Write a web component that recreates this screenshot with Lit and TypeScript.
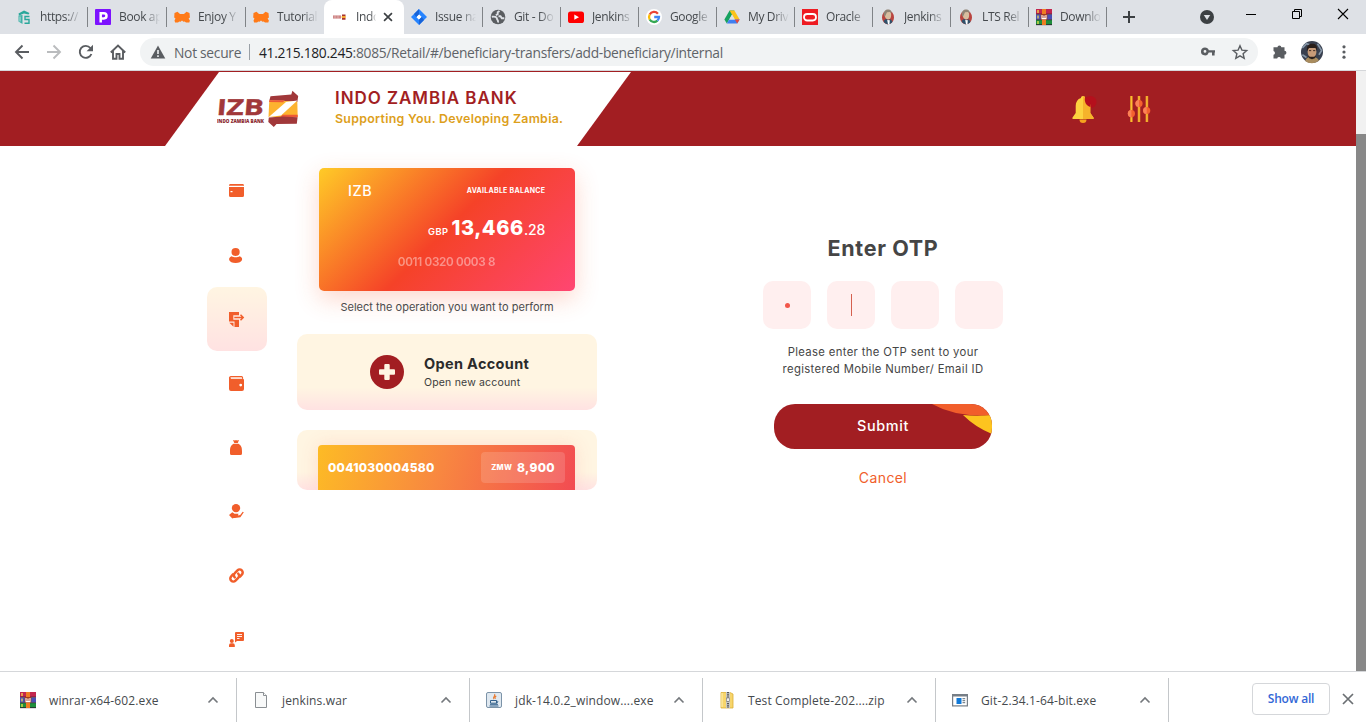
import { LitElement, html, svg, css, nothing } from "lit";
import { customElement, property } from "lit/decorators.js";
import { classMap } from "lit/directives/class-map.js";

const winrar = svg`
  <rect width="16" height="5" y="0" fill="#c2264e"/><rect width="16" height="5" y="5.5" fill="#4a4fb5"/><rect width="16" height="5" y="11" fill="#1f8f3c"/>
  <path d="M0 5.2h16M0 10.7h16M0 15.7h16" stroke="#2b1430" stroke-width=".8"/>
  <path d="M2 1v3M2 6.500v3M2 12v3" stroke="#ffe94a" stroke-width="1.2"/>
  <rect x="6" width="4" height="16" fill="#ef7d22"/><rect x="4.7" y="5" width="6.6" height="5.6" fill="#a33a1c"/>
  <path d="M6 6v3.600h4V6M8 6.500v3" stroke="#fff" fill="none" stroke-width="1.1"/>`;
const jenkins = svg`
  <ellipse cx="8" cy="8.400" rx="6" ry="7" fill="#b9443f"/>
  <path d="M5 3.500C6 .5 10.500.5 11 4.500c.6 3-.5 6-2.700 6S4 8 5 3.500z" fill="#d8bd9f"/>
  <path d="M4 7C3 1.500 6.500 0 9 .6c2 .5 3 2 2.500 3.800L10 3 7 3.200 5 7.500z" fill="#8f8374"/>
  <path d="M3.500 12 6 9.800l2 1.200 2.500-.8 2 2.300C11 16 5.500 16.500 3.500 12z" fill="#2f526c"/>
  <path d="M7.200 11l2.600.3-.4 4.200H8z" fill="#fff"/>`;
const metro = svg`<path d="M.5 4 3.500 2.700 6 5h4l2.500-2.300 3 1.300.4 4.500-1.300 1 1.300 2-.6 2H12l-1.300-1L8.800 13H7.200l-1.900-.5L4 13.500H1.100l-.6-2 1-2L.2 8.500z" fill="#ff7a18"/><path d="M6 13.200 8 11.400l2 1.800z" fill="#dee1e6"/>`;

const icons: Record<string, unknown> = {
  server: svg`<path d="M2.500 4.500 8 1.500l5.500 2.500-1 1.500L8 4.500 3 6.500z" fill="#2aa79b"/><path d="M2.500 6.500v6l4 2.500V6z" fill="#3fb0a6"/><path d="M13.500 7.500H9v3h4v3.800H8.500" stroke="#2aa79b" stroke-width="1.400" fill="none"/><path d="M4 7.500v5" stroke="#bfe5e2" stroke-width="1"/>`,
  p: svg`<rect width="16" height="16" rx="1" fill="#7d12ff"/><path d="M5.700 13.500V4.200h3.200a2.600 2.600 0 0 1 0 5.200H6" fill="none" stroke="#fff" stroke-width="2.500"/>`,
  metro,
  izb: svg`<path d="M1 6.500h8v3H1z" fill="#c46a6a"/><path d="M1 8h8M3 6v4M6 6v4" stroke="#e9c9c9" stroke-width=".6"/><path d="M10 5.500h3.500v1.700H10zM10 9h3.500v1.700H10z" fill="#a8322f"/><path d="M9.700 7h4v2h-4z" fill="#f3a62f"/>`,
  jira: svg`<path d="M8 0l8 8-8 8-8-8z" fill="#2684ff"/><path d="M8 5.300 10.700 8 8 10.700 5.300 8z" fill="#fff"/><path d="M8 0v5.300L5.300 8 3 5zM8 16v-5.300L10.700 8 13 11z" fill="#1763d8"/>`,
  globe: svg`<circle cx="8" cy="8" r="7.300" fill="#5a5d61"/><path d="M1.800 7.800c3-.6 5 .2 5.200 2 0 1.500 1.500 1 1 3.700M9.500 2 7.700 3.300v1.900L5.800 6.300M8.500 7.300h2l1.300 2h2.500" fill="none" stroke="#dee1e6" stroke-width="1.900"/>`,
  youtube: svg`<rect y="2.500" width="16" height="11.500" rx="2.600" fill="#f00"/><path d="M6.300 5.600v5.200L11 8.200z" fill="#fff"/>`,
  google: svg`<circle cx="8" cy="8" r="8" fill="#fff"/><g fill="none" stroke-width="2.300"><path d="M11.900 4.700A5 5 0 0 0 3.700 5.500" stroke="#ea4335"/><path d="M3.700 5.500a5 5 0 0 0 0 5" stroke="#fbbc05"/><path d="M3.700 10.500a5 5 0 0 0 7.700 1.200" stroke="#34a853"/><path d="M11.400 11.700A5 5 0 0 0 13 8H8.200" stroke="#4285f4"/></g>`,
  drive: svg`<path d="M5.600 1.500h4.800L5.200 10.500 2.800 14.600.4 10.500z" fill="#16a25f"/><path d="M5.600 1.500h4.800l5.200 9h-4.800z" fill="#fbc21a"/><path d="M5.200 10.500h10.400l-2.400 4.100H2.800z" fill="#3f7ff0"/><path d="M13.200 14.600l2.400-4.100h-4.800z" fill="#e8483a"/><path d="M8 5.600l2.800 4.900H5.200z" fill="#dee1e6"/>`,
  oracle: svg`<rect width="16" height="16" fill="#ee1c23"/><rect x="2" y="5" width="12" height="6.500" rx="3.200" fill="none" stroke="#fff" stroke-width="1.800"/>`,
  jenkins,
  winrar,
  file: svg`<path d="M2.500.5h8l3 3v12h-11z" fill="#f8f9f9" stroke="#8a8f93"/><path d="M10.500.5v3h3" fill="#fff" stroke="#8a8f93"/>`,
  java: svg`<rect x=".5" y=".5" width="15" height="15" rx="1.500" fill="#dfe8f0" stroke="#7c93a8"/><path d="M8.600 2c1.500 2-2.500 3-.6 5.200M10.300 4c-1.600 1-1.600 1.600-.8 2.800" stroke="#e8762a" stroke-width="1.100" fill="none"/><path d="M4.500 8.500h6v2.700h-6zM10.500 9c2-.2 1.600 2-.3 2M4 12.300h8M3.500 14h9" stroke="#33618c" fill="none"/>`,
  zip: svg`<path d="M2 .5h9l3 1.500v14H2z" fill="#f7d56b" stroke="#dcae36" stroke-width=".8"/><path d="M3 1v14" stroke="#fff2b8"/><rect x="7" width="4" height="16" fill="#c9c9c4"/><path d="M9 0v16" stroke="#555" stroke-width="2" stroke-dasharray="1.200 1"/><rect x="7.500" y="6" width="3" height="3.500" fill="#eee" stroke="#777" stroke-width=".6"/>`,
  installer: svg`<rect x=".6" y="2.600" width="14.800" height="11.300" fill="#fff" stroke="#777e86" stroke-width="1.200"/><path d="M0 3.500h16" stroke="#777e86" stroke-width="2"/><rect x="4.500" y="6" width="5" height="6" fill="#1079d8"/><path d="M10.500 6.700h2.700M10.500 8.700h2.700M10.500 10.700h2.700" stroke="#5c6b78"/>`,

  back: svg`<path d="M15 8H2.500M8.500 1.500 2 8l6.500 6.500" fill="none" stroke="#5a5d61" stroke-width="1.900"/>`,
  forward: svg`<path d="M1 8h12.500M7.500 1.500 14 8l-6.500 6.500" fill="none" stroke="#babcbe" stroke-width="1.900"/>`,
  reload: svg`<path d="M13.400 10A6 6 0 1 1 12.400 4l1.300 1.600" fill="none" stroke="#5a5d61" stroke-width="1.900"/><path d="M15 .8v6.400H8.600z" fill="#5a5d61"/>`,
  home: svg`<path d="M.8 8.500 8 1.500l7.200 7M3 7v7.700h3.500V10h3v4.700H13V7" fill="none" stroke="#5a5d61" stroke-width="1.900"/>`,
  warning: svg`<path d="M8 1.500 15.300 14.500H.7z" fill="#5a5d61"/><path d="M8 6v4M8 11.300v1.700" stroke="#f1f3f4" stroke-width="1.600"/>`,
  key: svg`<path d="M5 4a4 4 0 1 0 3.800 5.200H12V12h2.600V9.200H15V6.800H8.800A4 4 0 0 0 5 4zm0 2.600a1.400 1.400 0 1 1 0 2.800 1.400 1.400 0 0 1 0-2.800z" fill="#5a5d61" transform="translate(0 -.6)"/>`,
  star: svg`<path d="m8 1.700 1.900 4.400 4.800.4-3.600 3.200 1.100 4.700L8 11.900l-4.200 2.500 1.100-4.700L1.300 6.500l4.800-.4z" fill="none" stroke="#5a5d61" stroke-width="1.400"/>`,
  puzzle: svg`<path d="M5.500 3.300a1.900 1.900 0 0 1 3.800 0h3.200v3.500a1.900 1.900 0 0 1 0 3.900v3.800H8.900a1.900 1.900 0 0 0-3.700 0H1.500v-3.700a1.900 1.900 0 0 0 0-3.700V3.300z" fill="#5a5d61"/>`,
  dots: svg`<g fill="#5a5d61"><circle cx="8" cy="2.800" r="1.600"/><circle cx="8" cy="8" r="1.600"/><circle cx="8" cy="13.200" r="1.600"/></g>`,
  avatar: svg`<circle cx="8" cy="8" r="8" fill="#39404f"/><path d="M1 5l3-3 3 1M12 2l3 5-2 3M1 10l3 2" stroke="#8797a8" stroke-width="1.200" fill="none"/><path d="M3 14.500C4 12 6 11.500 8 11.500s4.500 1 5 2.800a8 8 0 0 1-10 .2z" fill="#a98c5e"/><ellipse cx="8" cy="7.800" rx="3.200" ry="4.600" fill="#c79b78"/><path d="M4.300 7.500C3.800 3 6 2 8.200 2s4.100 1 3.500 5.500L10.700 5 5.800 5zM5 10.500l1.500.9h3l1.500-.9-.9 2-2.100.8-2-.8z" fill="#2a1f1a"/><path d="M5.800 7h1.600M8.800 7h1.600" stroke="#3a2620" stroke-width=".7"/>`,
  plus: svg`<path d="M8 2v12M2 8h12" stroke="#3c4043" stroke-width="2"/>`,
  close: svg`<path d="m3.500 3.500 9 9m0-9-9 9" stroke="#3c4043" stroke-width="1.900"/>`,
  profile: svg`<circle cx="8" cy="8" r="8" fill="#3c4043"/><path d="M4.300 5.800h7.400L8 11.500z" fill="#dee1e6"/>`,
  minimize: svg`<path d="M3 8.500h10" stroke="#000"/>`,
  restore: svg`<path d="M3.500 5.500h7v7h-7zM5.500 5.500v-2h7v7h-2" fill="none" stroke="#000"/>`,
  exit: svg`<path d="m3 3 10 10M13 3 3 13" stroke="#000" stroke-width="1.100"/>`,
  chevron: svg`<path d="m3.500 10.500 4.500-4.500 4.500 4.500" fill="none" stroke="#74787c" stroke-width="1.600"/>`,
  dismiss: svg`<path d="m3 3 10 10M13 3 3 13" stroke="#6b6f73" stroke-width="1.700"/>`,

  card: svg`<path transform="translate(0 -1)" d="M2 1.500h12a1.500 1.500 0 0 1 1.500 1V3.200H.5v-.7A1.500 1.500 0 0 1 2 1.500zM.5 4.400h15v8.600a1.500 1.500 0 0 1-1.500 1.500H2A1.500 1.500 0 0 1 .5 13zM2 8.600v1.200h2V8.600z" fill="#f15e2b"/>`,
  user: svg`<ellipse cx="7.100" cy="4.400" rx="4.100" ry="4" fill="#f15e2b"/><path d="M3.200 8.700c2 1.300 5.900 1.300 7.900 0 4.500 1.500 3 6.800-4 6.800s-8.400-5.300-3.900-6.800z" fill="#f15e2b"/>`,
  transfer: svg`<path d="M.5.500h10v3.200H4.800v4.600h5.700v7.200H6V10H.5z" fill="#f15e2b"/><path d="M5.800 6h8.500M12 3.300 14.700 6 12 8.700" fill="none" stroke="#f15e2b" stroke-width="1.500"/><path d="M.8 11.300H5v4z" fill="#f15e2b"/>`,
  wallet: svg`<path d="M.5 3V13.500a2 2 0 0 0 2 2h11a2 2 0 0 0 2-2v-9a1.200 1.200 0 0 0-1-1.200A2 2 0 0 0 13 .5H2.500A2 2 0 0 0 .5 3zM2 1.700h11l.8 1.700H2.500zM12.200 8.200a1.400 1.400 0 1 1 0 2.800 1.400 1.400 0 0 1 0-2.800z" fill="#f15e2b" fill-rule="evenodd"/><path d="M2.500 2.500h11" stroke="#fbc9b5" stroke-width="1.300"/>`,
  bag: svg`<path d="M4.500.5 6.500 1l1-.5 1 .5 2-.5-1.200 3H5.800zM5 4.300h5c3 1.800 3.500 4 3.500 7.700v2a1.500 1.500 0 0 1-1.500 1.500H3A1.500 1.500 0 0 1 1.500 14v-2c0-3.700.5-5.900 3.500-7.700z" fill="#f15e2b"/>`,
  give: svg`<circle cx="7.500" cy="4.600" r="4.200" fill="#f15e2b"/><path d="M.5 11.500 3.800 8.800 6 10.200h4l-.6 1.700 2.300-.4 2.500-3.200 1.100.4-3.400 5-5.500.7H5.200L3.800 15z" fill="#f15e2b"/>`,
  link: svg`<g fill="none" stroke="#f15e2b" stroke-width="2.500" stroke-linecap="round"><path d="M6.300 9.900a3 3 0 0 1 0-4.300l2.700-2.800a3 3 0 0 1 4.300 4.300l-1.800 2"/><path d="M9.700 6.100a3 3 0 0 1 0 4.300L7 13.200a3 3 0 0 1-4.300-4.300l1.800-2"/></g>`,
  advisor: svg`<path d="M7.500.5h7a1 1 0 0 1 1 1V8.500a1 1 0 0 1-1 1H8.500L6.500 11v-9.500a1 1 0 0 1 1-1z" fill="#f15e2b"/><path d="M8.500 3h5M8.500 5h5M8.500 7h2.500" stroke="#fff" stroke-width=".9"/><circle cx="3.300" cy="9.500" r="2" fill="#f15e2b"/><path d="M.5 15.500v-1.800a2 2 0 0 1 2-2h1.800a2 2 0 0 1 2 2v1.800z" fill="#f15e2b"/>`,
};

/* Inline glyph drawn on a 16-unit square. */
@customElement("ui-icon")
class UiIcon extends LitElement {
  @property() name = "";
  static styles = css`
    :host { display: block; flex: none; width: 16px; height: 16px; }
    .glyph { display: block; width: 100%; height: 100%; overflow: visible; }
  `;
  render() {
    return html`<svg class="glyph" viewBox="0 0 16 16">${icons[this.name]}</svg>`;
  }
}

const tabs = [
  { icon: "server", title: "https://", size: "first" },
  { icon: "p", title: "Book ap", size: "wide" },
  { icon: "metro", title: "Enjoy Y", size: "wide" },
  { icon: "metro", title: "Tutorial", size: "" },
  { icon: "izb", title: "Indo", size: "active" },
  { icon: "jira", title: "Issue na", size: "wide" },
  { icon: "globe", title: "Git - Do", size: "" },
  { icon: "youtube", title: "Jenkins", size: "" },
  { icon: "google", title: "Google", size: "" },
  { icon: "drive", title: "My Driv", size: "" },
  { icon: "oracle", title: "Oracle", size: "" },
  { icon: "jenkins", title: "Jenkins", size: "" },
  { icon: "jenkins", title: "LTS Rel", size: "" },
  { icon: "winrar", title: "Downlo", size: "" },
];

@customElement("browser-chrome")
class BrowserChrome extends LitElement {
  static styles = css`
    :host { display: block; height: 71px; font: 12px "Open Sans", "Noto Sans", sans-serif; color: #45494d; }
    .strip { display: flex; height: 34px; background: #dee1e6; padding-left: 8px; }
    .tab { display: flex; align-items: center; box-sizing: border-box; width: 78px; height: 34px; padding-left: 7px; gap: 8px; position: relative; }
    .tab.first { width: 80px; padding-left: 8px; }
    .tab.wide { width: 79px; }
    .tab::after { content: ""; position: absolute; right: 0; top: 7px; width: 1px; height: 20px; background: #808387; }
    .tab.active { width: 80px; padding-left: 8px; background: #fff; border-radius: 8px 8px 0 0; }
    .tab.active::after, .tab.quiet::after { display: none; }
    .title { width: 42px; overflow: hidden; white-space: nowrap; line-height: 20px; letter-spacing: -.35px; -webkit-mask-image: linear-gradient(90deg, #000 60%, transparent 98%); mask-image: linear-gradient(90deg, #000 60%, transparent 98%); }
    .active .title { width: 24px; -webkit-mask-image: linear-gradient(90deg, #000 60%, transparent 85%); mask-image: linear-gradient(90deg, #000 60%, transparent 85%); }
    .shut { width: 14px; height: 14px; margin-left: -7px; }
    .new { margin: 9px 0 0 14px; }
    .profile { width: 14px; height: 14px; margin: 10px 0 0 auto; }
    .win { margin-top: 6px; }
    .min { margin-left: 29px; }
    .res { margin-left: 30px; }
    .out { margin: 6px 15px 0 30px; }
    .bar { display: flex; align-items: center; height: 36px; background: #fff; border-bottom: 1px solid #d5d7da; }
    .nav { display: flex; gap: 16px; padding-left: 14px; width: 126px; box-sizing: border-box; }
    .omnibox { display: flex; align-items: center; box-sizing: border-box; margin-left: 14px; width: 1118px; height: 28px; border-radius: 14px; background: #f1f3f4; padding: 0 10px; font-size: 13.800px; color: #5f6368; white-space: nowrap; }
    .warn { width: 16px; height: 16px; margin-right: 8px; }
    .secure { letter-spacing: -.28px; width: 75px; }
    .split { width: 1px; height: 16px; background: #9aa0a6; margin-right: 9px; }
    .url { letter-spacing: -.290px; flex: 1; }
    .host { color: #202124; }
    .key { margin-right: 16px; }
    .ext { margin-left: 14px; }
    .face { width: 22px; height: 22px; margin-left: 13px; }
    .more { margin-left: 13px; }
  `;
  render() {
    return html`
      <div class="strip">
        ${tabs.map(
          (t, i) => html`<div class=${classMap({ tab: true, [t.size || "plain"]: true, quiet: i === 3 })}>
            <ui-icon name=${t.icon}></ui-icon><span class="title">${t.title}</span>
            ${t.size === "active" ? html`<ui-icon class="shut" name="close"></ui-icon>` : nothing}
          </div>`
        )}
        <ui-icon class="new" name="plus"></ui-icon>
        <ui-icon class="profile" name="profile"></ui-icon>
        <ui-icon class="win min" name="minimize"></ui-icon>
        <ui-icon class="win res" name="restore"></ui-icon>
        <ui-icon class="out" name="exit"></ui-icon>
      </div>
      <div class="bar">
        <div class="nav">
          ${["back", "forward", "reload", "home"].map((n) => html`<ui-icon name=${n}></ui-icon>`)}
        </div>
        <div class="omnibox">
          <ui-icon class="warn" name="warning"></ui-icon>
          <span class="secure">Not secure</span><i class="split"></i>
          <span class="url"><span class="host">41.215.180.245</span>:8085/Retail/#/beneficiary-transfers/add-beneficiary/internal</span>
          <ui-icon class="key" name="key"></ui-icon><ui-icon name="star"></ui-icon>
        </div>
        <ui-icon class="ext" name="puzzle"></ui-icon>
        <ui-icon class="face" name="avatar"></ui-icon>
        <ui-icon class="more" name="dots"></ui-icon>
      </div>
    `;
  }
}

@customElement("bank-header")
class BankHeader extends LitElement {
  static styles = css`
    :host { display: flex; height: 75px; background: #a21e22; }
    .brand { box-sizing: border-box; display: flex; width: 466px; height: 74px; margin: 1px 0 0 165px; padding: 18px 0 0 52px; background: #fff; clip-path: polygon(54px 0, 100% 0, 412px 100%, 0 100%); }
    .logo { width: 82px; height: 38px; }
    .words { margin: -1px 0 0 36px; white-space: nowrap; }
    .name { font-size: 17px; line-height: 18px; font-weight: 600; color: #a21e22; letter-spacing: .950px; }
    .motto { font-size: 12.400px; line-height: 16px; margin-top: 4px; font-weight: 600; color: #dd9f1c; letter-spacing: .290px; }
    .tools { display: flex; gap: 30px; margin-left: auto; padding: 24px 203px 0 0; }
    .tool { width: 26px; height: 28px; display: block; }
    .acronym { font: 700 22px "Open Sans", sans-serif; fill: #a1383a; stroke: #a1383a; stroke-width: .4px; }
    .tiny { font: 800 4.600px "Open Sans", sans-serif; fill: #8c2a30; }
  `;
  render() {
    return html`
      <div class="brand">
        <svg class="logo" viewBox="0 0 82 38">
          <text class="acronym" x="0" y="25.500" transform="translate(1.500 0) skewX(-5)" textLength="47" lengthAdjust="spacingAndGlyphs">IZB</text>
          <text class="tiny" x="0" y="33.300" textLength="47" lengthAdjust="spacingAndGlyphs">INDO ZAMBIA BANK</text>
          <path d="M53.500 6.200 74.300 4.600 75.400.700 81.200 6 80.300 12 66 10.700 52.300 10.500z" fill="#a1383a"/>
          <path d="M52.300 10.500 80.300 11.500 80.700 27 51.500 27z" fill="#fdb32f"/>
          <path d="M52.300 10.300h15l-1 2-14.200-.3zM65.500 24.800h15.200v2.400H63.500z" fill="#ee5a36"/>
          <path d="M69 12 80.400 10.500 64 25.500 51.800 27z" fill="#fff"/>
          <path d="M51.800 27.500 65 26.500 80.600 27.200 79.800 33.800 59.500 34 56.800 37 51.300 32z" fill="#a1383a"/>
        </svg>
        <div class="words"><div class="name">INDO ZAMBIA BANK</div><div class="motto">Supporting You. Developing Zambia.</div></div>
      </div>
      <div class="tools">
        <svg class="tool" viewBox="0 0 26 28">
          <circle cx="19.500" cy="7" r="6" fill="#b5101c"/>
          <path d="M12 1c1.300 0 2 .8 2 2 3.500 1 5.300 4 5.300 8v7l3.200 4.500v1.500H1.500v-1.500L4.700 18v-7c0-4 1.800-7 5.300-8 0-1.200.7-2 2-2z" fill="#fdd23f"/>
          <path d="M12 1c1.300 0 2 .8 2 2 3.500 1 5.300 4 5.300 8v7l3.200 4.500v1.500H12z" fill="#f6b32b"/>
          <path d="M8.500 24.500h7a3.500 3.500 0 0 1-7 0z" fill="#f5a21f"/>
          <path d="M14 2.600C16.500 2 20 4 19.500 12 15.500 11.500 13 7 14 2.600z" fill="#b5101c"/>
        </svg>
        <svg class="tool" viewBox="0 0 26 28">
          <path d="M4.400 1v26M12 1v26M19.900 1v26" stroke="#e5912a" stroke-width="2.600"/>
          <path d="M4.400 1v26M12 1v26M19.900 1v26" stroke="#fbc02f" stroke-width="1.200"/>
          <g fill="#f4622f"><circle cx="4.400" cy="18.600" r="3.600"/><circle cx="12" cy="8.500" r="3.600"/><circle cx="19.700" cy="15.500" r="3.600"/></g>
          <path d="M4.400 15a3.600 3.600 0 0 0 0 7.200zM12 4.900a3.600 3.600 0 0 0 0 7.200zM19.700 11.900a3.600 3.600 0 0 0 0 7.200z" fill="#fb8357"/>
        </svg>
      </div>
    `;
  }
}

@customElement("account-panel")
class AccountPanel extends LitElement {
  static styles = css`
    :host { display: block; width: 300px; height: 344px; padding-top: 22px; white-space: nowrap; }
    .card { box-sizing: border-box; width: 256px; height: 123px; margin: 0 22px; padding: 14px 30px 0 29px; border-radius: 5px; color: #fff; background: linear-gradient(135deg, #ffcb27, #f54228 50%, #ff4672); box-shadow: 0 8px 24px rgba(245, 86, 40, .24); }
    .top { display: flex; justify-content: space-between; align-items: center; height: 18px; margin-top: -.5px; font-size: 14.400px; font-weight: 500; letter-spacing: .600px; }
    .label { font-size: 7px; font-weight: 700; letter-spacing: .260px; margin-right: -.2px; }
    .balance { display: flex; justify-content: flex-end; align-items: baseline; height: 26px; line-height: 26px; margin-top: 15.500px; }
    .cur { font-size: 9.300px; font-weight: 600; margin-right: 3px; letter-spacing: .450px; }
    .whole { font-size: 20px; font-weight: 800; letter-spacing: .600px; }
    .cents { font-size: 14px; font-weight: 500; letter-spacing: -.2px; }
    .number { margin-top: 13px; text-align: center; height: 16px; line-height: 16px; font-size: 11.700px; font-weight: 600; opacity: .42; letter-spacing: -.310px; }
    .hint { height: 16px; line-height: 16px; margin: 8px 0 19px; text-align: center; font-size: 11px; color: #4b4b4b; }
    .tile { background: linear-gradient(#fff5e2 70%, #ffe2e2); border-radius: 10px; }
    .open { display: flex; align-items: center; height: 76px; padding-left: 73px; gap: 20px; }
    .plus { width: 34px; height: 34px; display: block; }
    .title { font-size: 14.500px; line-height: 18px; font-weight: 700; color: #2b2b2b; letter-spacing: .330px; }
    .sub { font-size: 10.500px; line-height: 16px; margin-top: 1px; color: #3c3c3c; letter-spacing: .180px; padding-top: 1px; margin-bottom: -1px; }
    .clip { height: 60px; margin-top: 20px; overflow: hidden; }
    .strip { box-sizing: border-box; display: flex; align-items: center; justify-content: space-between; margin: 15px 22px 0 21px; height: 45px; padding: 0 10px; border-radius: 4px 4px 0 0; color: #fff; font-weight: 800; font-size: 12px; letter-spacing: .280px; background: linear-gradient(105deg, #fdbb25, #f88740 48%, #f24b52); box-shadow: 0 0 18px rgba(245, 86, 80, .15); }
    .amount { display: flex; align-items: center; justify-content: center; gap: 5px; width: 84px; height: 31px; border-radius: 4px; background: rgba(255, 255, 255, .15); }
    .unit { font-size: 7.500px; }
  `;
  render() {
    return html`
      <div class="card">
        <div class="top"><span>IZB</span><span class="label">AVAILABLE BALANCE</span></div>
        <div class="balance"><span class="cur">GBP</span><span class="whole">13,466</span><span class="cents">.28</span></div>
        <div class="number">0011 0320 0003 8</div>
      </div>
      <div class="hint">Select the operation you want to perform</div>
      <div class="tile open">
        <svg class="plus" viewBox="0 0 34 34"><circle cx="17" cy="17" r="17" fill="#a21e22"/><rect x="14.300" y="9" width="5.400" height="16" rx="1" fill="#fff5e2"/><rect x="9" y="14.300" width="16" height="5.400" rx="1" fill="#fff5e2"/></svg>
        <div><div class="title">Open Account</div><div class="sub">Open new account</div></div>
      </div>
      <div class="tile clip"><div class="strip">
        <span>0041030004580</span>
        <span class="amount"><span class="unit">ZMW</span><span>8,900</span></span>
      </div></div>
    `;
  }
}

@customElement("otp-form")
class OtpForm extends LitElement {
  static styles = css`
    :host { display: flex; flex-direction: column; align-items: center; width: 240px; padding-top: 87px; white-space: nowrap; }
    .heading { font-size: 21.500px; line-height: 30px; font-weight: 700; color: #454545; letter-spacing: .650px; }
    .cells { display: flex; gap: 16px; margin-top: 18px; }
    .cell { display: flex; align-items: center; justify-content: center; width: 48px; height: 48px; border-radius: 10px; background: #ffefef; }
    .dot { width: 5px; height: 5px; border-radius: 50%; background: #f2564a; }
    .caret { width: 1px; height: 22px; background: #d5604f; margin-left: 1px; }
    .note { margin-top: 15px; font-size: 11.300px; line-height: 17px; text-align: center; color: #454545; letter-spacing: .350px; }
    .submit { display: grid; width: 218px; height: 45px; margin-top: 26px; border-radius: 21px; overflow: hidden; background: #a21e22; }
    .submit > * { grid-area: 1 / 1; }
    .wave { width: 218px; height: 45px; }
    .go { align-self: center; margin-top: -2.500px; text-align: center; color: #fff; font-size: 14.400px; font-weight: 500; letter-spacing: .650px; }
    .cancel { margin-top: 19px; line-height: 20px; font-size: 14px; color: #f15e2b; letter-spacing: .400px; }
  `;
  render() {
    return html`
      <div class="heading">Enter OTP</div>
      <div class="cells">
        <div class="cell"><i class="dot"></i></div>
        <div class="cell"><i class="caret"></i></div>
        <div class="cell"></div>
        <div class="cell"></div>
      </div>
      <div class="note">Please enter the OTP sent to your<br />registered Mobile Number/ Email ID</div>
      <div class="submit">
        <svg class="wave" viewBox="0 0 218 45">
          <path d="M158 0Q182 13.500 218 11V0z" fill="#f15e2b"/>
          <path d="M189 11Q201 23 218 30V11Q203 12.500 189 11z" fill="#fdc41f"/>
        </svg>
        <span class="go">Submit</span>
      </div>
      <div class="cancel">Cancel</div>
    `;
  }
}

const downloads = [
  { icon: "winrar", name: "winrar-x64-602.exe" },
  { icon: "file", name: "jenkins.war" },
  { icon: "java", name: "jdk-14.0.2_window....exe" },
  { icon: "zip", name: "Test Complete-202....zip" },
  { icon: "installer", name: "Git-2.34.1-64-bit.exe" },
];

@customElement("download-shelf")
class DownloadShelf extends LitElement {
  static styles = css`
    :host { display: flex; box-sizing: border-box; height: 57px; border-top: 1px solid #d5d7da; background: #fff; font: 12px "Open Sans", "Noto Sans", sans-serif; color: #45494d; white-space: nowrap; }
    .item { box-sizing: border-box; display: flex; align-items: center; width: 233px; height: 44px; margin-top: 6px; padding: 0 15px 0 16px; border-right: 1px solid #c4c7ca; }
    .item.lead { width: 237px; padding-left: 20px; }
    .name { margin-left: 13px; letter-spacing: .130px; flex: 1; }
    .all { box-sizing: border-box; width: 78px; height: 32px; margin: 11px 0 0 auto; line-height: 30px; text-align: center; border: 1px solid #d5d7da; border-radius: 4px; font-weight: 600; color: #3367d6; letter-spacing: -.2px; }
    .x { margin: 19px 10px 0; }
  `;
  render() {
    return html`
      ${downloads.map(
        (d, i) => html`<div class=${classMap({ item: true, lead: i === 0 })}>
          <ui-icon name=${d.icon}></ui-icon><span class="name">${d.name}</span><ui-icon name="chevron"></ui-icon>
        </div>`
      )}
      <div class="all">Show all</div>
      <ui-icon class="x" name="dismiss"></ui-icon>
    `;
  }
}

const menu = ["card", "user", "transfer", "wallet", "bag", "give", "link", "advisor"];

@customElement("app-root")
class AppRoot extends LitElement {
  static styles = css`
    :host { display: block; width: 1366px; height: 728px; overflow: hidden; background: #fff; font-family: Inter, "Noto Sans", sans-serif; }
    .view { display: flex; height: 600px; }
    .page { width: 1356px; overflow: hidden; }
    .scroll { width: 10px; background: #f1f1f1; }
    .thumb { height: 537px; margin-top: 63px; background: #888; }
    .main { display: flex; padding-left: 207px; }
    .menu { width: 60px; padding-top: 13px; margin-right: 30px; }
    .entry { box-sizing: border-box; display: flex; align-items: center; height: 64px; padding-left: 21px; border-radius: 10px; }
    .entry.on { background: linear-gradient(#fff5e2, #ffe2e2); }
    .mark { transform: translate(.5px, .5px); }
    .form { margin-left: 166px; }
  `;
  render() {
    return html`
      <browser-chrome></browser-chrome>
      <div class="view">
        <div class="page">
          <bank-header></bank-header>
          <div class="main">
            <div class="menu">
              ${menu.map((m) => html`<div class=${classMap({ entry: true, on: m === "transfer" })}><ui-icon class="mark" name=${m}></ui-icon></div>`)}
            </div>
            <account-panel></account-panel>
            <otp-form class="form"></otp-form>
          </div>
        </div>
        <div class="scroll"><div class="thumb"></div></div>
      </div>
      <download-shelf></download-shelf>
    `;
  }
}
